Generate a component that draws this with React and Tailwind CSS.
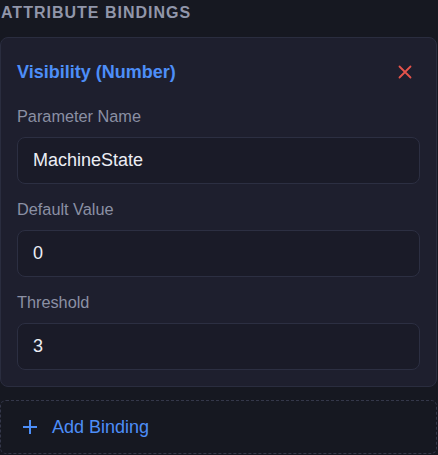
import React from "react";

function Field({ label, value }) {
  return (
    <div className="flex flex-col">
      <div className="h-[18px] leading-[18px] text-[16.3px] text-[#8b90a4] mb-[12px]">{label}</div>
      <div className="h-[47px] rounded-lg border border-[#2c2f42] bg-[#1a1b28] px-[15px] flex items-center text-[18px] text-[#eceef5]">
        {value}
      </div>
    </div>
  );
}

export default function App() {
  return (
    <div
      className="w-[438px] h-[455px] bg-[#161821] overflow-hidden"
      style={{ fontFamily: '"Liberation Sans", Arial, sans-serif' }}
    >
      <div className="h-[25px] pl-[1px] flex items-center text-[16px] font-bold tracking-[1px] text-[#9196aa] uppercase">
        Attribute Bindings
      </div>
      <div className="mt-3 mx-0 w-[437px] rounded-lg border border-[#2a2d3f] bg-[#1e1f2e] p-4">
        <div className="h-9 flex items-center justify-between mb-[17px]">
          <div className="text-[18px] font-bold text-[#4d8ef8]">Visibility (Number)</div>
          <button className="w-6 h-6 mr-[3px] flex items-center justify-center text-[#e5534b]">
            <svg width="14" height="14" viewBox="0 0 14 14" fill="none" stroke="currentColor" strokeWidth="1.8" strokeLinecap="round">
              <path d="M1.5 1.5 L12.5 12.5 M12.5 1.5 L1.5 12.5" />
            </svg>
          </button>
        </div>
        <div className="flex flex-col gap-4">
          <Field label="Parameter Name" value="MachineState" />
          <Field label="Default Value" value="0" />
          <Field label="Threshold" value="3" />
        </div>
      </div>
      <button className="mt-[13px] w-[437px] h-[54px] rounded-md border border-dashed border-[#34374a] flex items-center pl-[21px] text-[18px] text-[#4d8ef8]">
        <svg width="16" height="16" viewBox="0 0 16 16" fill="none" stroke="currentColor" strokeWidth="2">
          <path d="M8 1 V15 M1 8 H15" />
        </svg>
        <span className="ml-[14px]">Add Binding</span>
      </button>
    </div>
  );
}
